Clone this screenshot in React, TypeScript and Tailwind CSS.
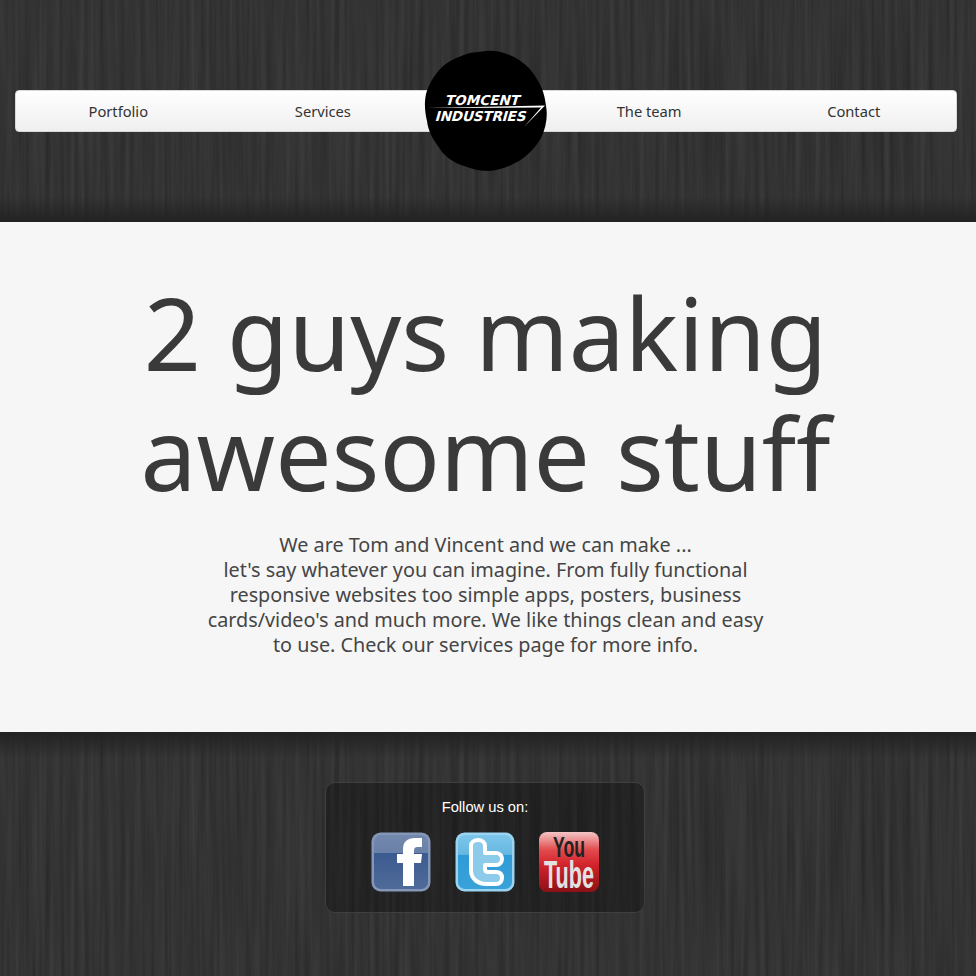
import React from "react";

// grain texture for the header and footer, stretched noise reads as wood
const Wood = ({id}: {id: string}) => (
    <svg className="absolute inset-0 h-full w-full" aria-hidden="true">
        <filter id={id} x="0" y="0" width="100%" height="100%" colorInterpolationFilters="sRGB">
            <feTurbulence type="fractalNoise" baseFrequency="0.2 0.005" numOctaves="4" seed="7"/>
            <feColorMatrix type="matrix" values="0.1 0 0 0 0.15  0.1 0 0 0 0.15  0.1 0 0 0 0.15  0 0 0 0 1"/>
        </filter>
        <rect width="100%" height="100%" filter={`url(#${id})`}/>
    </svg>
);

const NavLink = ({label}: {label: string}) => (
    <a href="#" className="w-[205px] text-center text-[14.7px] leading-[41px] text-[#333333]">{label}</a>
);

const Logo = () => (
    <div className="absolute left-[424px] top-[50px] h-[122px] w-[124px]">
        <svg viewBox="0 0 124 122" className="absolute inset-0 h-full w-full">
            <path d="M62 1C74 0 88 4 99 13C105 17 111 25 114 31C119 39 121 47 122 56C124 66 122 78 117 88C112 97 104 105 95 111C86 116 77 120 65 121C54 121 46 118 37 115C27 111 20 106 14 96C8 88 4 80 3 71C1 62 0 54 2 44C5 34 10 25 18 17C26 10 36 6 46 3C51 2 57 2 62 1Z" fill="#000"/>
            <path d="M3 58L121 55.5L100 77L117 57.6Z" fill="#fff"/>
        </svg>
        <div className="absolute left-[22px] top-[43px] skew-x-[-16deg] font-['DejaVu_Sans',sans-serif] text-[13.6px] font-bold leading-[14px] text-white">TOMCENT</div>
        <div className="absolute left-[12px] top-[59px] skew-x-[-16deg] font-['DejaVu_Sans',sans-serif] text-[13.6px] font-bold leading-[14px] tracking-[-0.2px] text-white">INDUSTRIES</div>
    </div>
);

const FacebookIcon = () => (
    <svg viewBox="0 0 60 60" className="h-[60px] w-[60px]">
        <defs>
            <linearGradient id="fbBg" x1="0" y1="0" x2="0" y2="1">
                <stop offset="0" stopColor="#7388ad"/>
                <stop offset="0.33" stopColor="#6a80a8"/>
                <stop offset="0.34" stopColor="#3b5a8f"/>
                <stop offset="1" stopColor="#4f6b99"/>
            </linearGradient>
        </defs>
        <rect x="0.5" y="0.5" width="59" height="59" rx="9" fill="#8497b8"/>
        <rect x="3" y="3" width="54" height="54" rx="7" fill="url(#fbBg)"/>
        <path d="M32 54V31H26V22H32V17C32 10 36 6 44 6H51V15H47C44 15 43 16 43 19V22H51L50 31H43V54Z" fill="#fff"/>
    </svg>
);

const TwitterIcon = () => (
    <svg viewBox="0 0 60 60" className="h-[60px] w-[60px]">
        <defs>
            <linearGradient id="twBg" x1="0" y1="0" x2="0" y2="1">
                <stop offset="0" stopColor="#7cc5ea"/>
                <stop offset="0.36" stopColor="#66b8e2"/>
                <stop offset="0.37" stopColor="#2f9bd6"/>
                <stop offset="1" stopColor="#3aa2da"/>
            </linearGradient>
        </defs>
        <rect x="0.5" y="0.5" width="59" height="59" rx="9" fill="#9ad4f0"/>
        <rect x="3" y="3" width="54" height="54" rx="7" fill="url(#twBg)"/>
        <path d="M16 14V38C16 47 23 52 31 52H41C45 52 47 49 47 46C47 42 45 40 41 40H33C31 40 30 39 30 37V33H41C45 33 47 30 47 27C47 24 45 21 41 21H30V14C30 10 27 8 23 8C19 8 16 10 16 14Z" fill="#8ccbea" stroke="#fff" strokeWidth="4" strokeLinejoin="round"/>
    </svg>
);

const YoutubeIcon = () => (
    <svg viewBox="0 0 60 60" className="h-[60px] w-[60px]">
        <defs>
            <linearGradient id="ytBg" x1="0" y1="0" x2="0" y2="1">
                <stop offset="0" stopColor="#f3c6c6"/>
                <stop offset="0.3" stopColor="#e24a4d"/>
                <stop offset="0.55" stopColor="#d2232a"/>
                <stop offset="1" stopColor="#8c1116"/>
            </linearGradient>
        </defs>
        <rect width="60" height="60" rx="8" fill="url(#ytBg)"/>
        <text x="30" y="25" textAnchor="middle" fontFamily="'Liberation Sans',sans-serif" fontWeight="700" fontSize="30" fill="#222" textLength="32" lengthAdjust="spacingAndGlyphs">You</text>
        <text x="30" y="56" textAnchor="middle" fontFamily="'Liberation Sans',sans-serif" fontWeight="700" fontSize="38" fill="#e2e2e2" textLength="50" lengthAdjust="spacingAndGlyphs">Tube</text>
    </svg>
);

export default function App() {
    return (
        <div className="w-[976px] font-['Noto_Sans',sans-serif]">
            <header className="relative h-[222px] bg-[#333333] px-[15px] pt-[90px]">
                <Wood id="woodTop"/>
                <div className="absolute inset-x-0 bottom-0 h-[26px] bg-gradient-to-b from-transparent to-[#222222]"/>
                <nav className="relative flex h-[42px] w-[942px] rounded-[4px] border border-[#d8d8d8] bg-gradient-to-b from-white to-[#efefef]">
                    <NavLink label="Portfolio"/>
                    <NavLink label="Services"/>
                    <div className="w-[122px]"/>
                    <NavLink label="The team"/>
                    <NavLink label="Contact"/>
                </nav>
                <Logo/>
            </header>

            <main className="flex h-[510px] flex-col items-center bg-[#f6f6f6] pt-[50px] text-center">
                <h1 className="pr-[5px] text-[100px] font-normal leading-[120px] text-[#3a3a3a]">
                    2 guys making<br/>awesome stuff
                </h1>
                <p className="mr-[5px] mt-[20px] w-[570px] text-[19.8px] leading-[25px] text-[#454545]">
                    We are Tom and Vincent and we can make ...<br/>
                    let's say whatever you can imagine. From fully functional responsive websites too simple apps, posters, business cards/video's and much more. We like things clean and easy to use. Check our services page for more info.
                </p>
            </main>

            <footer className="relative h-[244px] bg-[#333333] pt-[50px]">
                <Wood id="woodBottom"/>
                <div className="absolute inset-x-0 top-0 h-[26px] bg-gradient-to-b from-[#222222] to-transparent"/>
                <div className="relative ml-[325px] flex h-[131px] w-[320px] flex-col items-center rounded-[10px] border border-[#3f3f3f] bg-[rgba(0,0,0,0.3)] pt-[14px]">
                    <p className="font-['Liberation_Sans',sans-serif] text-[14.7px] leading-[20px] text-white">Follow us on:</p>
                    <div className="mt-[15px] flex gap-[24px]">
                        <FacebookIcon/>
                        <TwitterIcon/>
                        <YoutubeIcon/>
                    </div>
                </div>
            </footer>
        </div>
    );
}
